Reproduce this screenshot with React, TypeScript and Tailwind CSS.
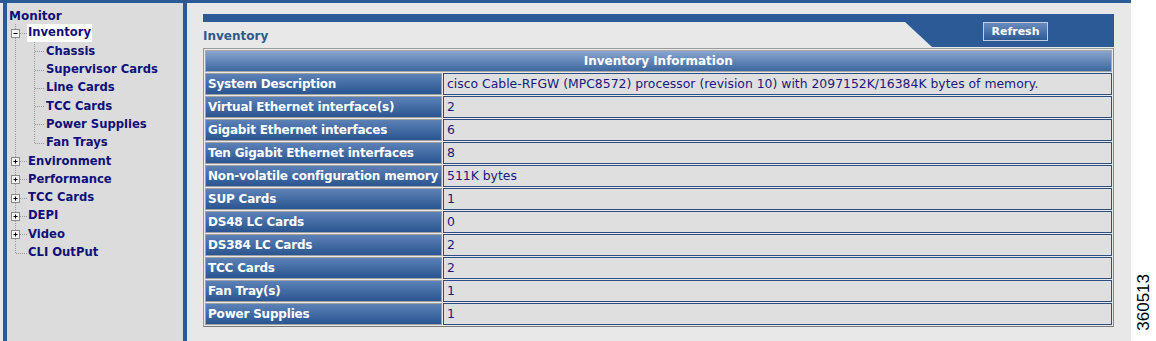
import React from "react";

type Row = { label: string; value: string };
const rows: Row[] = [
  { label: "System Description", value: "cisco Cable-RFGW (MPC8572) processor (revision 10) with 2097152K/16384K bytes of memory." },
  { label: "Virtual Ethernet interface(s)", value: "2" },
  { label: "Gigabit Ethernet interfaces", value: "6" },
  { label: "Ten Gigabit Ethernet interfaces", value: "8" },
  { label: "Non-volatile configuration memory", value: "511K bytes" },
  { label: "SUP Cards", value: "1" },
  { label: "DS48 LC Cards", value: "0" },
  { label: "DS384 LC Cards", value: "2" },
  { label: "TCC Cards", value: "2" },
  { label: "Fan Tray(s)", value: "1" },
  { label: "Power Supplies", value: "1" },
];

const H = 18.3;

function Box({ plus }: { plus: boolean }) {
  return (
    <g>
      <rect x={10.5} y={5.5} width={8} height={8} fill="#f4f4f4" stroke="#8a8a8a" />
      <line x1={12.5} y1={9.5} x2={16.5} y2={9.5} stroke="#000" />
      {plus && <line x1={14.5} y1={7.5} x2={14.5} y2={11.5} stroke="#000" />}
    </g>
  );
}

function TopConn({ kind, last }: { kind: "plus" | "minus" | "leaf"; last?: boolean }) {
  return (
    <svg width={26} height={H} className="shrink-0">
      <line x1={14.5} y1={0} x2={14.5} y2={last ? 9.5 : H} stroke="#999" strokeDasharray="1 1" />
      <line x1={15} y1={9.5} x2={26} y2={9.5} stroke="#999" strokeDasharray="1 1" />
      {kind === "plus" && <Box plus />}
      {kind === "minus" && <Box plus={false} />}
    </svg>
  );
}

function ChildConn({ last }: { last?: boolean }) {
  return (
    <svg width={44} height={H} className="shrink-0">
      <line x1={14.5} y1={0} x2={14.5} y2={H} stroke="#999" strokeDasharray="1 1" />
      <line x1={33.5} y1={0} x2={33.5} y2={last ? 9.5 : H} stroke="#999" strokeDasharray="1 1" />
      <line x1={34} y1={9.5} x2={44} y2={9.5} stroke="#999" strokeDasharray="1 1" />
    </svg>
  );
}

function TreeRow({ children, conn, hl }: { children: React.ReactNode; conn: React.ReactNode; hl?: boolean }) {
  return (
    <div className="flex items-stretch" style={{ height: H }}>
      {conn}
      <span className={`flex items-center whitespace-nowrap px-[1px] ${hl ? "bg-white" : ""}`}>{children}</span>
    </div>
  );
}

export default function App() {
  const font = { fontFamily: '"DejaVu Sans", Verdana, sans-serif' };
  return (
    <div className="w-[1156px] h-[341px] flex bg-white overflow-hidden" style={font}>
      <div className="w-[1133px] h-full flex flex-col bg-[#e8e8e8]">
        <div className="h-[3px] bg-[#2c5a96] shrink-0" />
        <div className="flex flex-1 min-h-0">
          {/* left tree */}
          <div className="ml-[3px] w-[184px] border-x-4 border-[#2c5a96] bg-[#dcdcdc] text-[11.6px] font-bold text-[#10107a] pl-[1px]">
            <div className="h-[20px] flex items-end pl-[1px] leading-none pb-[1px] text-[12px]">Monitor</div>
            <div className="-ml-[7px] mt-[1px]">
              <TreeRow conn={<TopConn kind="minus" />} hl>Inventory</TreeRow>
              {["Chassis", "Supervisor Cards", "Line Cards", "TCC Cards", "Power Supplies", "Fan Trays"].map((t, i, a) => (
                <TreeRow key={t} conn={<ChildConn last={i === a.length - 1} />}>{t}</TreeRow>
              ))}
              {["Environment", "Performance", "TCC Cards", "DEPI", "Video"].map((t) => (
                <TreeRow key={t} conn={<TopConn kind="plus" />}>{t}</TreeRow>
              ))}
              <TreeRow conn={<TopConn kind="leaf" last />}>CLI OutPut</TreeRow>
            </div>
          </div>

          {/* main */}
          <div className="flex-1 pl-[16px] pr-[17px] pt-[11px]">
            <div className="flex flex-col bg-[#2c5a96]">
              <div className="h-[8px]" />
              <div className="flex h-[25px]">
                <div className="w-[702px] bg-[#e8e8e8] flex items-center pt-[3px] text-[12px] font-bold text-[#2d5a8e]">
                  Inventory
                </div>
                <svg width={27} height={25} className="shrink-0">
                  <polygon points="0,0 27,25 0,25" fill="#e8e8e8" />
                </svg>
                <div className="flex-1 flex items-start">
                  <button
                    className="ml-[51px] w-[65px] h-[19px] border border-[#c5cdda] text-white text-[11px] font-bold leading-none flex items-center justify-center"
                    style={{ background: "linear-gradient(#6a8cbf, #2d5a94)" }}
                  >
                    Refresh
                  </button>
                </div>
              </div>
            </div>
            <div className="h-[1px]" />
            <table
              className="w-full table-fixed border-separate border border-[#9a9a9a] border-r-[#8a8a8a] border-b-[#7a7a7a]"
              style={{ borderSpacing: "1px" }}
            >
              <colgroup>
                <col className="w-[237px]" />
                <col />
              </colgroup>
              <tbody>
                <tr>
                  <td
                    colSpan={2}
                    className="h-[22px] text-center text-white text-[12px] font-bold border border-[#a8a8a8] p-0"
                    style={{ background: "linear-gradient(#8aa5cf, #3c679f)" }}
                  >
                    Inventory Information
                  </td>
                </tr>
                {rows.map((r) => (
                  <tr key={r.label}>
                    <td
                      className="h-[22px] px-[2px] py-0 text-white text-[12px] tracking-[-0.2px] font-bold whitespace-nowrap overflow-hidden border border-[#a0a0a0]"
                      style={{ background: "linear-gradient(#5c81b7, #2a5590)" }}
                    >
                      {r.label}
                    </td>
                    <td className="h-[22px] px-[3px] py-0 text-[12.4px] text-[#1a1a80] bg-[#dfdfdf] border border-[#2e4f86] whitespace-nowrap">
                      {r.value}
                    </td>
                  </tr>
                ))}
              </tbody>
            </table>
          </div>
        </div>
      </div>
      <div className="flex-1 flex items-end justify-center pb-[10px]">
        <div
          className="text-[17px] text-black whitespace-nowrap"
          style={{ writingMode: "vertical-rl", transform: "rotate(180deg)", fontFamily: '"Liberation Sans", Arial, sans-serif' }}
        >
          360513
        </div>
      </div>
    </div>
  );
}
